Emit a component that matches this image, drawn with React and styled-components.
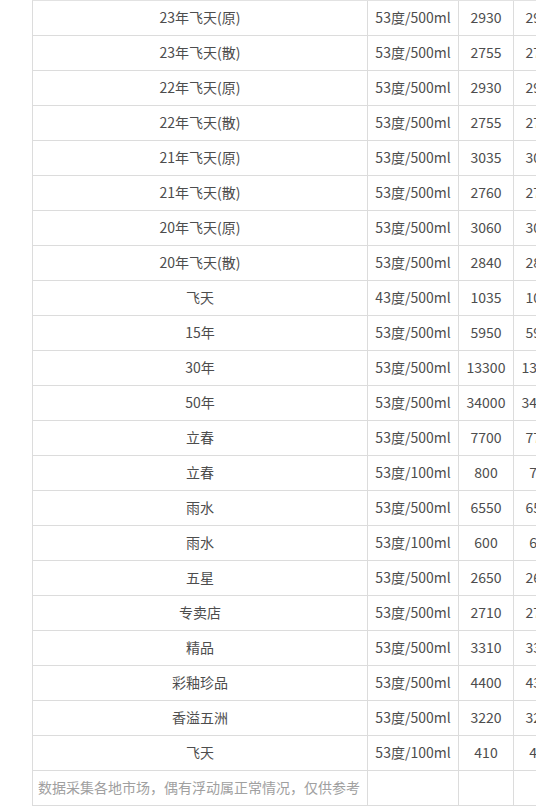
import React from "react";
import styled, { createGlobalStyle } from "styled-components";

const Global = createGlobalStyle`
  html, body {
    margin: 0;
    padding: 0;
    background: #ffffff;
    overflow: hidden;
  }
  body {
    font-family: "Microsoft YaHei", "Noto Sans CJK SC", "Noto Sans", sans-serif;
  }
`;

const Page = styled.div`
  padding-left: 32px;
  width: 600px;
`;

const Grid = styled.div`
  display: grid;
  grid-template-columns: 335px 91px 55px 55px;
  border-left: 1px solid #dcdcdc;
  border-top: 1px solid #e2e2e2;
`;

const Cell = styled.div`
  box-sizing: border-box;
  height: 35px;
  border-right: 1px solid #dcdcdc;
  border-bottom: 1px solid #dcdcdc;
  display: flex;
  align-items: center;
  justify-content: ${(p) => (p.$left ? "flex-start" : "center")};
  padding: 0 ${(p) => (p.$left ? "5px" : "0")} 2px;
  font-size: 14px;
  color: ${(p) => (p.$muted ? "#a0a0a0" : "#4d4d4d")};
  white-space: nowrap;
  overflow: visible;
`;

const rows = [
  ["23年飞天(原)", "53度/500ml", "2930", "2900"],
  ["23年飞天(散)", "53度/500ml", "2755", "2720"],
  ["22年飞天(原)", "53度/500ml", "2930", "2900"],
  ["22年飞天(散)", "53度/500ml", "2755", "2720"],
  ["21年飞天(原)", "53度/500ml", "3035", "3000"],
  ["21年飞天(散)", "53度/500ml", "2760", "2730"],
  ["20年飞天(原)", "53度/500ml", "3060", "3030"],
  ["20年飞天(散)", "53度/500ml", "2840", "2810"],
  ["飞天", "43度/500ml", "1035", "1010"],
  ["15年", "53度/500ml", "5950", "5900"],
  ["30年", "53度/500ml", "13300", "13200"],
  ["50年", "53度/500ml", "34000", "34000"],
  ["立春", "53度/500ml", "7700", "7700"],
  ["立春", "53度/100ml", "800", "780"],
  ["雨水", "53度/500ml", "6550", "6500"],
  ["雨水", "53度/100ml", "600", "600"],
  ["五星", "53度/500ml", "2650", "2620"],
  ["专卖店", "53度/500ml", "2710", "2700"],
  ["精品", "53度/500ml", "3310", "3300"],
  ["彩釉珍品", "53度/500ml", "4400", "4350"],
  ["香溢五洲", "53度/500ml", "3220", "3200"],
  ["飞天", "53度/100ml", "410", "400"],
];

export default function App() {
  return (
    <>
      <Global />
      <Page>
        <Grid>
          {rows.map((r, i) => (
            <React.Fragment key={i}>
              {r.map((c, j) => (
                <Cell key={j}>{c}</Cell>
              ))}
            </React.Fragment>
          ))}
          <Cell $left $muted>
            数据采集各地市场，偶有浮动属正常情况，仅供参考
          </Cell>
          <Cell />
          <Cell />
          <Cell />
        </Grid>
      </Page>
    </>
  );
}
